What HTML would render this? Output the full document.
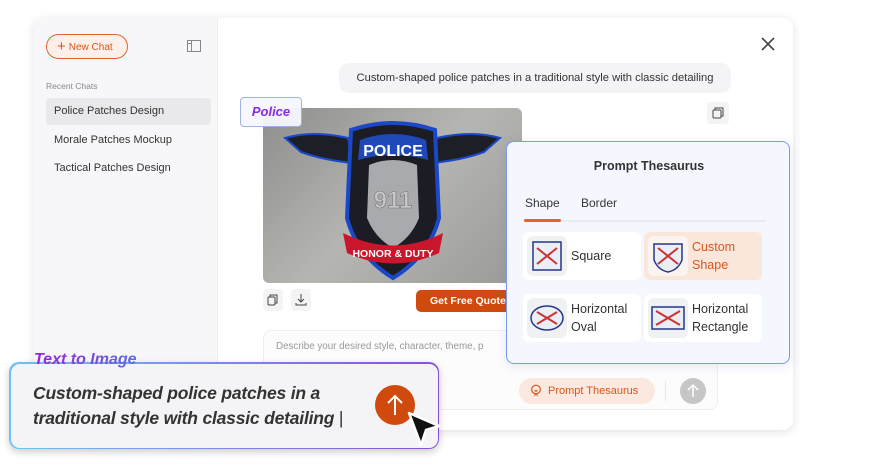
<!DOCTYPE html>
<html><head><meta charset="utf-8"><style>
*{box-sizing:border-box;margin:0;padding:0}
body{width:882px;height:467px;background:#fff;font-family:"Liberation Sans",sans-serif;position:relative;overflow:hidden;color:#333}
.abs{position:absolute}
.card{left:34px;top:18px;width:759px;height:412px;background:#fff;border-radius:10px;box-shadow:0 2px 10px rgba(0,0,0,.12);overflow:hidden}
.side{left:0;top:0;width:184px;height:412px;background:#f7f7f9;border-right:1px solid #eee}
.newchat{left:12px;top:16px;width:82px;height:25px;border:1px solid #e6632b;border-radius:13px;background:#fdf0ea;color:#d9561c;font-size:10px;line-height:23px;padding-left:10px}
.newchat b{font-size:15px;font-weight:normal;vertical-align:-1px;margin-right:3px}
.item{left:12px;width:165px;height:27px;font-size:11px;line-height:27px;padding-left:8px;color:#333;border-radius:4px}
.thumb{width:40px;height:40px;border-radius:6px;background:#f0f1f3;position:absolute;left:4px;top:4px}
.opt{position:absolute;width:118px;height:48px;border-radius:6px;background:#fff;font-size:12.5px;color:#333}
.opt span{position:absolute;left:48px;top:6px;line-height:18px}
</style></head><body>
<div class="abs card">
  <div class="abs side">
    <div class="abs newchat"><b>+</b>New Chat</div>
    <svg class="abs" style="left:153px;top:22px" width="15" height="12"><rect x="0.5" y="0.5" width="13" height="11" fill="none" stroke="#888" stroke-width="1"/><line x1="4.5" y1="0.5" x2="4.5" y2="11.5" stroke="#888"/><line x1="0.5" y1="3.5" x2="4.5" y2="3.5" stroke="#888"/></svg>
    <div class="abs" style="left:12px;top:63px;font-size:8.5px;color:#888">Recent Chats</div>
    <div class="abs item" style="top:80px;background:#e9e9eb">Police Patches Design</div>
    <div class="abs item" style="top:109px">Morale Patches Mockup</div>
    <div class="abs item" style="top:137px">Tactical Patches Design</div>
  </div>
  <svg class="abs" style="left:727px;top:19px" width="14" height="14"><path d="M1 1L13 13M13 1L1 13" stroke="#444" stroke-width="1.6"/></svg>
  <div class="abs" style="left:305px;top:45px;width:392px;height:30px;background:#f4f4f6;border-radius:10px;font-size:11.2px;line-height:30px;text-align:center;color:#333">Custom-shaped police patches in a traditional style with classic detailing</div>
  <div class="abs" style="left:673px;top:84px;width:22px;height:22px;background:#f4f4f6;border-radius:4px"><svg width="22" height="22"><rect x="6" y="8" width="8" height="8" rx="1" fill="none" stroke="#444"/><path d="M8 8V6h8v8h-2" fill="none" stroke="#444"/></svg></div>
  <!-- image -->
  <div class="abs" style="left:229px;top:90px;width:259px;height:175px;border-radius:6px;overflow:hidden;background:linear-gradient(135deg,#8e8e8c,#b5b5b2 50%,#9a9a97)">
    <svg width="259" height="175" viewBox="0 0 259 175">
      <path d="M22 30 Q50 22 85 30 L90 55 Q60 52 38 44Z" fill="#1d1f26" stroke="#1a48c8" stroke-width="2"/>
      <path d="M237 30 Q209 22 174 30 L169 55 Q199 52 221 44Z" fill="#1d1f26" stroke="#1a48c8" stroke-width="2"/>
      <path d="M88 22 Q130 8 172 22 L176 110 Q166 148 130 170 Q94 148 84 110Z" fill="#1c1d24" stroke="#1a48c8" stroke-width="4"/>
      <path d="M97 32 Q130 20 163 32 L165 52 Q130 42 95 52Z" fill="#1f49b8"/>
      <text x="130" y="48" font-size="16" font-weight="bold" fill="#fff" text-anchor="middle" font-family="Liberation Sans">POLICE</text>
      <path d="M106 57 Q130 47 154 57 L156 110 Q148 130 130 140 Q112 130 104 110Z" fill="#a9aaad"/>
      <text x="130" y="100" font-size="24" font-weight="bold" fill="#c6c6c8" stroke="#777" stroke-width=".6" text-anchor="middle" font-family="Liberation Sans">911</text>
      <path d="M80 125 Q130 150 180 125 L176 145 Q130 166 84 145Z" fill="#c9162a"/>
      <text x="130" y="149" font-size="10.5" font-weight="bold" fill="#fff" text-anchor="middle" font-family="Liberation Sans">HONOR &amp; DUTY</text>
    </svg>
  </div>
  <div class="abs" style="left:229px;top:271px;width:20px;height:22px;background:#f4f4f6;border-radius:4px"><svg width="20" height="22"><rect x="5" y="8" width="7" height="8" rx="1" fill="none" stroke="#444"/><path d="M7 8V6h7v8h-2" fill="none" stroke="#444"/></svg></div>
  <div class="abs" style="left:257px;top:271px;width:20px;height:22px;background:#f4f4f6;border-radius:4px"><svg width="20" height="22"><path d="M10 5v8M7 10l3 3 3-3M5 14v2h10v-2" fill="none" stroke="#444"/></svg></div>
  <div class="abs" style="left:382px;top:272px;width:110px;height:22px;background:#d04a0d;border-radius:5px;color:#fff;font-size:10.5px;font-weight:bold;line-height:22px;padding-left:14px">Get Free Quote</div>
  <!-- input -->
  <div class="abs" style="left:229px;top:312px;width:455px;height:80px;border:1px solid #eee;border-radius:8px;background:#fcfcfc">
    <div class="abs" style="left:12px;top:10px;font-size:9.8px;color:#999">Describe your desired style, character, theme, p</div>
    <div class="abs" style="left:255px;top:47px;width:136px;height:26px;background:#fbe8df;border-radius:13px;color:#d9561c;font-size:11px;line-height:26px;padding-left:29px">Prompt Thesaurus</div>
    <svg class="abs" style="left:266px;top:53px" width="12" height="14"><circle cx="6" cy="5.5" r="4.3" fill="none" stroke="#d9561c" stroke-width="1.2"/><path d="M4 11h4M4.5 6l1.5 1.5L7.5 6" fill="none" stroke="#d9561c"/></svg>
    <div class="abs" style="left:401px;top:50px;width:1px;height:20px;background:#e5e5e5"></div>
    <div class="abs" style="left:416px;top:47px;width:26px;height:26px;border-radius:13px;background:#c6c6c6"><svg width="26" height="26"><path d="M13 19V7M8 12l5-5 5 5" fill="none" stroke="#fff" stroke-width="1.5"/></svg></div>
  </div>
</div>
<!-- Police tag -->
<div class="abs" style="left:240px;top:97px;width:62px;height:30px;border:1px solid #9fb2e6;border-radius:4px;background:rgba(245,247,255,.95);font-size:13px;font-weight:bold;font-style:italic;color:#8a2be2;line-height:28px;text-align:center">Police</div>
<!-- Thesaurus panel -->
<div class="abs" style="left:506px;top:141px;width:284px;height:223px;border:1px solid #7c98ea;border-radius:8px;background:#f5f7fe;box-shadow:0 2px 10px rgba(80,100,200,.15);overflow:hidden">
  <div class="abs" style="left:0;top:17px;width:284px;text-align:center;font-size:12.5px;font-weight:bold;color:#333">Prompt Thesaurus</div>
  <div class="abs" style="left:18px;top:54px;font-size:12px;color:#333">Shape</div>
  <div class="abs" style="left:74px;top:54px;font-size:12px;color:#333">Border</div>
  <div class="abs" style="left:17px;top:78px;width:241px;height:2px;background:#e9ebf0"></div>
  <div class="abs" style="left:17px;top:77px;width:37px;height:3px;background:#e6632b;border-radius:2px"></div>
  <div class="opt" style="left:16px;top:90px"><div class="thumb"><svg width="40" height="40"><rect x="6" y="6" width="28" height="28" fill="#eaeef5" stroke="#24378a" stroke-width="1.5"/><path d="M10 28l20-16M10 12l20 16" stroke="#c33" stroke-width="2"/></svg></div><span style="top:15px">Square</span></div>
  <div class="opt" style="left:137px;top:90px;background:#fbe6dc;color:#d9561c"><div class="thumb" style="background:#fbf3ef"><svg width="40" height="40"><path d="M6 8h28v16q-4 10-14 12q-10-2-14-12z" fill="#eaeef5" stroke="#24378a" stroke-width="1.5"/><path d="M10 28l20-16M10 12l20 16" stroke="#c33" stroke-width="2"/></svg></div><span>Custom<br>Shape</span></div>
  <div class="opt" style="left:16px;top:152px"><div class="thumb"><svg width="40" height="40"><ellipse cx="20" cy="20" rx="16" ry="12" fill="#eaeef5" stroke="#24378a" stroke-width="1.5"/><path d="M10 26l20-12M10 14l20 12" stroke="#c33" stroke-width="2"/></svg></div><span>Horizontal<br>Oval</span></div>
  <div class="opt" style="left:137px;top:152px"><div class="thumb"><svg width="40" height="40"><rect x="4" y="9" width="32" height="22" fill="#eaeef5" stroke="#24378a" stroke-width="1.5"/><path d="M8 27l24-14M8 13l24 14" stroke="#c33" stroke-width="2"/></svg></div><span>Horizontal<br>Rectangle</span></div>
</div>
<!-- Text to image box -->
<div class="abs" style="left:9px;top:362px;width:430px;height:87px;border-radius:10px;padding:1.5px;background:linear-gradient(90deg,#6fc3f0,#8a4fd8);box-shadow:0 3px 8px rgba(0,0,0,.2)">
  <div style="width:100%;height:100%;border-radius:9px;background:#f4f4f6"></div>
</div>
<div class="abs" style="left:34px;top:351px;font-size:16px;font-weight:bold;font-style:italic;background:linear-gradient(90deg,#9b20d6,#5a6fe0);-webkit-background-clip:text;color:transparent">Text to Image</div>
<div class="abs" style="left:33px;top:381px;font-size:17.5px;font-weight:bold;font-style:italic;color:#333;line-height:25px;letter-spacing:-.2px">Custom-shaped police patches in a<br>traditional style with classic detailing <span style="font-weight:normal;font-style:normal">|</span></div>
<div class="abs" style="left:375px;top:385px;width:40px;height:40px;border-radius:20px;background:#d04a0d"><svg width="40" height="40"><path d="M20 30V11M13 18l7-7 7 7" fill="none" stroke="#fff" stroke-width="2"/></svg></div>
<svg class="abs" style="left:406px;top:410px" width="36" height="40"><path d="M3 3L33 16 20 20 15 35Z" fill="#111" stroke="#fff" stroke-width="2.5" stroke-linejoin="round"/></svg>
</body></html>
